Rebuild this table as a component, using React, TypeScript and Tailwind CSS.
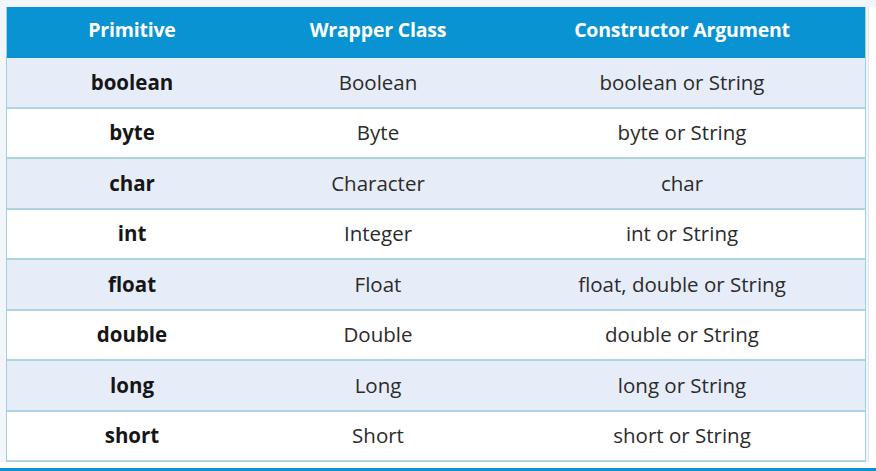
import React from "react";

const rows: [string, string, string][] = [
  ["boolean", "Boolean", "boolean or String"],
  ["byte", "Byte", "byte or String"],
  ["char", "Character", "char"],
  ["int", "Integer", "int or String"],
  ["float", "Float", "float, double or String"],
  ["double", "Double", "double or String"],
  ["long", "Long", "long or String"],
  ["short", "Short", "short or String"],
];

const App: React.FC = () => {
  return (
    <div
      className="w-[876px] h-[471px] bg-[#f2f6fa] flex flex-col overflow-hidden"
      style={{ fontFamily: '"Open Sans", "Liberation Sans", sans-serif' }}
    >
      <div className="flex flex-1 pt-[7px] pl-[6px]">
        {/* Tabla */}
        <div className="w-[860px] flex flex-col border-x border-[#9fd0e2] bg-white">
          <div className="flex h-[51px] pb-[5px] bg-[#0a93d2] text-white font-bold text-[19.5px] items-center tracking-[-0.2px]">
            <div className="w-[250px] text-center">Primitive</div>
            <div className="w-[242px] text-center">Wrapper Class</div>
            <div className="flex-1 text-center">Constructor Argument</div>
          </div>
          {rows.map((r, i) => (
            <div
              key={r[0]}
              className={`flex h-[50.5px] items-center text-[20.5px] border-b-2 border-[#acd4e1] ${
                i % 2 === 0 ? "bg-[#e7edf8]" : "bg-white"
              }`}
            >
              <div className="w-[250px] text-center font-bold text-[#161616]">{r[0]}</div>
              <div className="w-[242px] text-center text-[#2b2b2b]">{r[1]}</div>
              <div className="flex-1 text-center text-[#2b2b2b]">{r[2]}</div>
            </div>
          ))}
        </div>
        <div className="flex-1 bg-white border-l border-[#e2e6ea] ml-[2px]"></div>
      </div>
      <div className="h-[6px] bg-white"></div>
      <div className="h-[3px] bg-[#0d8fd4]"></div>
    </div>
  );
};

export default App;
